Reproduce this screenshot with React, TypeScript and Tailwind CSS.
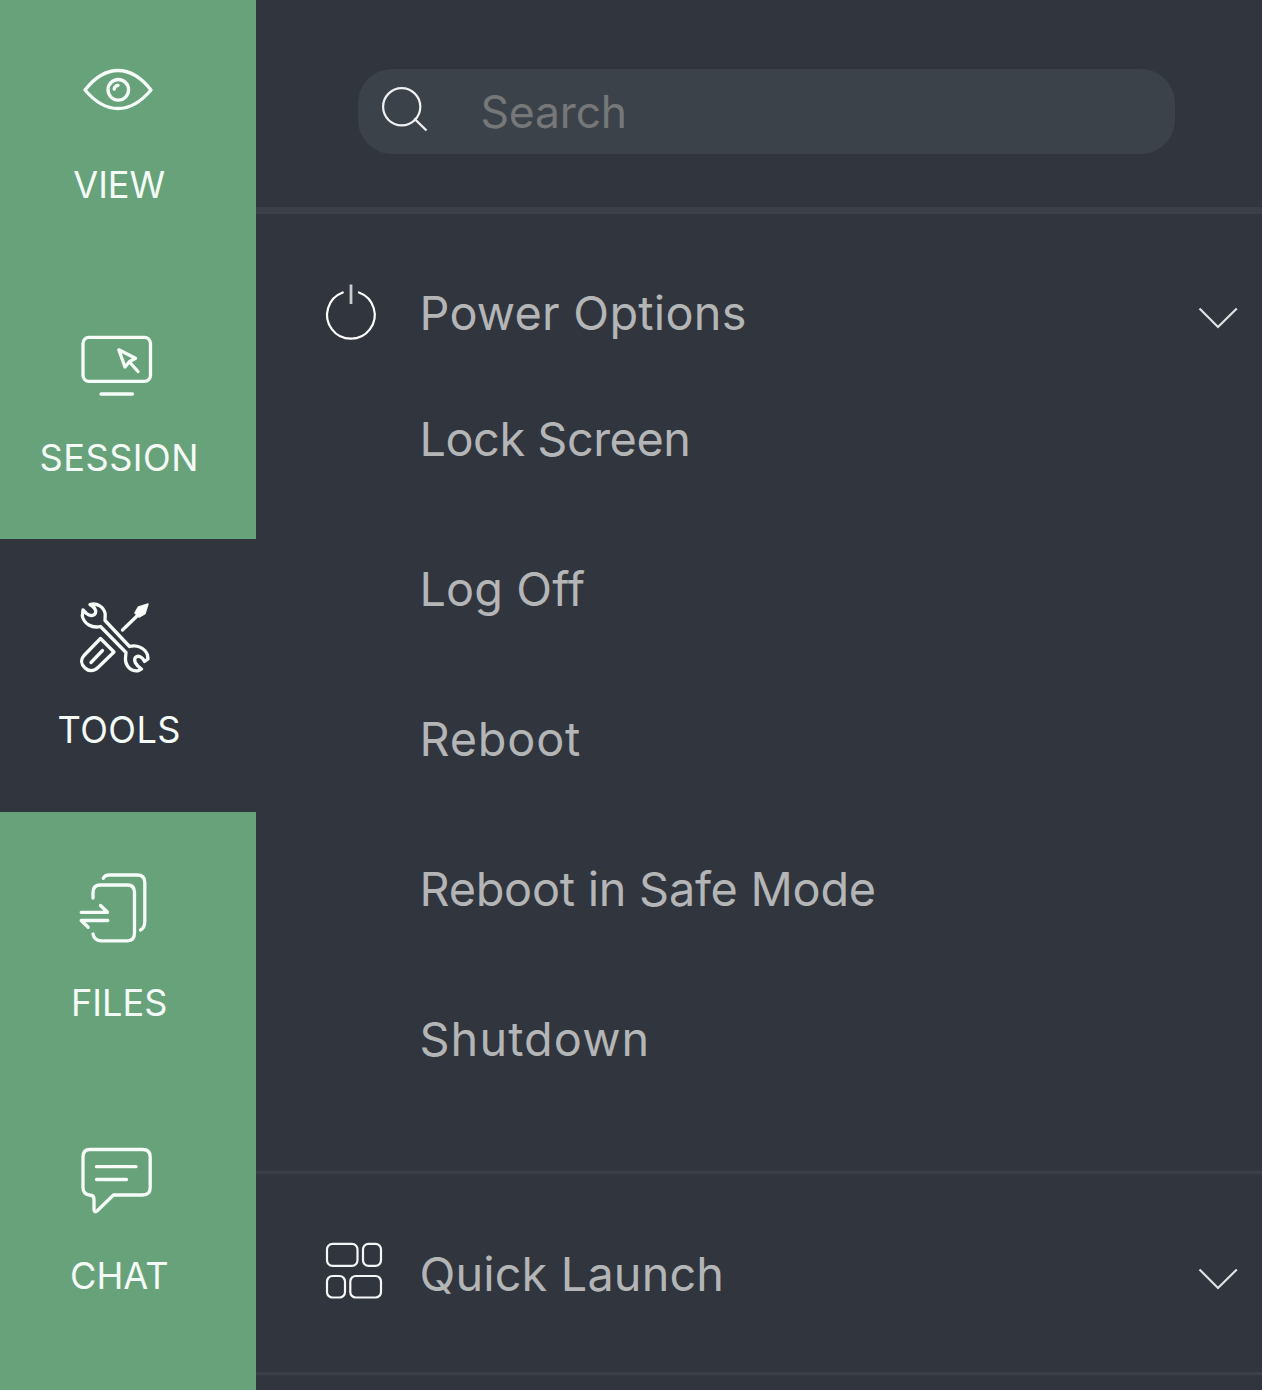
import type { ReactNode } from "react";

function NavIcon({ viewBox, children }: { viewBox: string; children: ReactNode }) {
  return (
    <svg
      className="block h-20 w-20 shrink-0"
      viewBox={viewBox}
      fill="none"
      stroke="#f6fcf8"
      strokeWidth={3.3}
      strokeLinecap="round"
      strokeLinejoin="round"
    >
      {children}
    </svg>
  );
}

const navItems = [
  {
    label: "VIEW",
    box: "h-[266px] pt-[52px] bg-[#68a27b]",
    text: "tracking-[0px]",
    icon: (
      <NavIcon viewBox="77 52 80 80">
        <path d="M85 90C96 76 107 70.5 118 70.5S140 76 151 90C140 103 129 108.5 118 108.5S96 103 85 90Z" />
        <circle cx="118.3" cy="89.8" r="10.3" />
        <path d="M114.2 89.2C114.4 87 115.8 85.6 118 85.3" />
      </NavIcon>
    ),
  },
  {
    label: "SESSION",
    box: "h-[273px] pt-[59px] bg-[#68a27b]",
    text: "tracking-[0.5px]",
    icon: (
      <NavIcon viewBox="77 325 80 80">
        <rect x="83" y="337.3" width="67.5" height="44" rx="6" />
        <path d="M101 394H132.5M118.8 349.8L135.5 358.2L129.3 361.7L125 367Z M129.5 362L138 371.5" />
      </NavIcon>
    ),
  },
  {
    label: "TOOLS",
    box: "h-[273px] pt-[58px] bg-[#31353e]",
    text: "tracking-[0.4px]",
    icon: (
      <NavIcon viewBox="77 597 80 80">
        <path d="M90 604.5C97 602.5 104 607 105.2 614L105 620.5L129.5 646.5C137 644.5 145 648 147.5 655L148 659L144.5 661.5C142.5 656.5 138 655 135.3 657.5C133.5 660.5 135.5 665 141.5 669L138 670.8C130 671.5 125 665 125.5 658L126 652.5L100.5 626.5C92 628.5 84 624 82.3 616L83 610L86.5 613.5C90 616.5 94 616 95.5 613C96.5 610 94 607 90 604.5Z" />
        <path d="M100.5 638.5L114 652L98 667.5C94 671.5 88.5 671.5 85 668C81 664.5 80.5 659.5 84 655.5Z" />
        <path d="M91 662.5L102.5 650.5M122.5 630L137 616" />
        <path d="M148 604L145 613.5L139 617L135 613L138.5 607Z" fill="#fff" strokeWidth={1.5} />
      </NavIcon>
    ),
  },
  {
    label: "FILES",
    box: "h-[272px] pt-[58px] bg-[#68a27b]",
    text: "tracking-[0px]",
    icon: (
      <NavIcon viewBox="77 870 80 80">
        <path d="M103.3 878.2C104.5 876 106.5 875 109 875H137C142 875 144.8 877.5 144.8 882.5V921C144.8 925.5 143.5 928.5 140.5 930" />
        <path d="M93 898V892.5C93 887.5 95.8 885 100.5 885H127.5C132 885 134.5 887.5 134.5 892.5V933C134.5 938 132 940.8 127.5 940.8H101.5C96.5 940.8 93.8 938.5 93 934" />
        <path d="M100.5 905.5L107.5 912.3H81.2M107.8 920.5H81.2L88.2 927.3" />
      </NavIcon>
    ),
  },
  {
    label: "CHAT",
    box: "h-[306px] pt-[59px] bg-[#68a27b]",
    text: "tracking-[0px]",
    icon: (
      <NavIcon viewBox="77 1143 80 80">
        <path d="M90 1149.5H142.5C147.5 1149.5 150.2 1152 150.2 1157V1187.5C150.2 1192.5 147.5 1195 142.5 1195H113.5L97.5 1210.5C95.5 1212.5 94 1212 94 1209.5V1199.5C94 1196.5 92.5 1195 89.5 1195C85.5 1194.5 83 1192.5 83 1187.5V1157C83 1152 85.5 1149.5 90 1149.5Z" />
        <path d="M96.5 1166.7H136M96.5 1179.5H126.5" />
      </NavIcon>
    ),
  },
];

function PowerIcon() {
  return (
    <svg className="block h-[60px] w-[60px]" viewBox="321 283 60 60" fill="none" stroke="#fff" strokeWidth={2.2} strokeLinecap="round">
      <path d="M342.8 292.5A23.8 23.8 0 1 0 359 292.5" />
      <path d="M351 284.5V304" stroke="#c9cbce" strokeWidth={2.8} strokeLinecap="butt" />
    </svg>
  );
}

function LaunchIcon() {
  return (
    <svg className="block h-[60px] w-[60px]" viewBox="321 1244 60 60" overflow="visible" fill="none" stroke="#f4f6f8" strokeWidth={2.2}>
      <rect x="327" y="1243.8" width="30.5" height="22" rx="5.5" />
      <rect x="363" y="1243.8" width="18" height="22" rx="5.5" />
      <rect x="327" y="1276" width="18" height="21.5" rx="5.5" />
      <rect x="350.3" y="1276" width="30.7" height="21.5" rx="5.5" />
    </svg>
  );
}

function SectionHeader({ icon, children }: { icon: ReactNode; children: ReactNode }) {
  return (
    <div className="flex h-[101px] items-center pl-[65px] pr-6">
      {icon}
      <div className="ml-[39px] flex-1">{children}</div>
      <svg className="mt-[9px] block h-[22px] w-10" viewBox="1198 307 40 22" fill="none" stroke="#dfe1e3" strokeWidth={2.2}>
        <path d="M1199.5 308.5L1218 327L1236.8 308.5" />
      </svg>
    </div>
  );
}

const powerOptions = [
  { label: "Lock Screen", text: "tracking-[-0.45px]" },
  { label: "Log Off", text: "tracking-[0.1px]" },
  { label: "Reboot", text: "tracking-[0.8px]" },
  { label: "Reboot in Safe Mode", text: "tracking-[-0.25px]" },
  { label: "Shutdown", text: "tracking-[1.1px]" },
];

export default function App() {
  return (
    <div className="flex h-[1390px] w-[1262px] overflow-hidden bg-[#31353e] font-['Inter',sans-serif] text-[46.8px] leading-[60px] text-[#b4b5b6]">
      <nav className="flex w-[255.5px] shrink-0 flex-col">
        {navItems.map((item) => (
          <div key={item.label} className={`flex shrink-0 flex-col pr-[17px] ${item.box}`}>
            <div className="flex justify-center pr-[4px]">{item.icon}</div>
            <div className="mt-[33px] text-center text-[36.2px] leading-[40px] text-[#f4faf6]">
              <span className={item.text}>{item.label}</span>
            </div>
          </div>
        ))}
      </nav>
      <main className="flex min-w-0 flex-1 flex-col">
        <div className="h-[214px] shrink-0 border-b-[7px] border-[#3b3f48] pl-[102.5px] pt-[69px]">
          <div className="flex h-[84.5px] w-[817px] items-center rounded-[34px] bg-[#3c4249] pl-[22px]">
            <svg className="block h-[50px] w-[50px]" viewBox="380 86 50 50" fill="none" stroke="#eef0f2" strokeWidth={2.2}>
              <circle cx="401.7" cy="106.8" r="18.6" />
              <path d="M414.2 118.5L426.5 130.5" strokeWidth={2.4} />
            </svg>
            <span className="ml-[50.5px] pt-[2px] text-[44.5px] tracking-[-0.2px] text-[#757779]">Search</span>
          </div>
        </div>
        <section className="h-[960px] shrink-0 border-b-[3px] border-[#3b3f48] pt-[48.5px]">
          <SectionHeader icon={<PowerIcon />}>
            <span className="tracking-[0.25px]">Power Options</span>
          </SectionHeader>
          <ul>
            {powerOptions.map((option) => (
              <li key={option.label} className="flex h-[150px] items-center pl-[164px]">
                <span className={option.text}>{option.label}</span>
              </li>
            ))}
          </ul>
        </section>
        <section className="h-[201px] shrink-0 border-b-[3px] border-[#3b3f48] pt-[49.5px]">
          <SectionHeader icon={<LaunchIcon />}>
            <span className="tracking-[0.15px]">Quick Launch</span>
          </SectionHeader>
        </section>
      </main>
    </div>
  );
}
